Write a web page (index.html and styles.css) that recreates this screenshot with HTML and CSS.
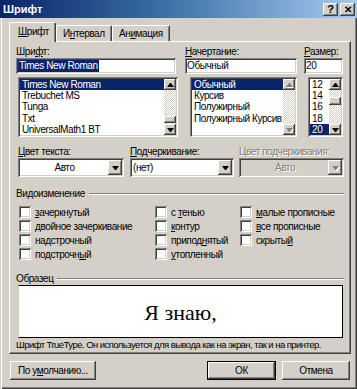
FILE: index.html
```html
<!DOCTYPE html>
<html lang="ru">
<head>
<meta charset="utf-8">
<title>Шрифт</title>
<link rel="stylesheet" href="styles.css">
</head>
<body>
<div class="dlg">
  <div class="title">
    <span class="title-text">Шрифт</span>
    <div class="tbtns"><span class="tb">?</span><span class="tb tb-x">✕</span></div>
  </div>
  <div class="tabs">
    <div class="tab sel"><u>Ш</u>рифт</div>
    <div class="tab">И<u>н</u>тервал</div>
    <div class="tab">Ан<u>и</u>мация</div>
  </div>
  <div class="panel">
    <div class="top3">
      <div class="col">
        <div class="lbl">Шри<u>ф</u>т:</div>
        <div class="field"><span class="hl">Times New Roman</span></div>
        <div class="list list-font">
          <div class="items">
            <div class="row sel">Times New Roman</div>
            <div class="row">Trebuchet MS</div>
            <div class="row">Tunga</div>
            <div class="row">Txt</div>
            <div class="row">UniversalMath1 BT</div>
          </div>
          <div class="sb">
            <span class="sbtn"><i class="up"></i></span>
            <span class="track"><span class="thumb t-font"></span></span>
            <span class="sbtn"><i class="dn"></i></span>
          </div>
        </div>
      </div>
      <div class="col">
        <div class="lbl"><u>Н</u>ачертание:</div>
        <div class="field">Обычный</div>
        <div class="list list-style">
          <div class="items">
            <div class="row sel">Обычный</div>
            <div class="row">Курсив</div>
            <div class="row">Полужирный</div>
            <div class="row">Полужирный Курсив</div>
          </div>
          <div class="sb">
            <span class="sbtn"><i class="up dis"></i></span>
            <span class="track"></span>
            <span class="sbtn"><i class="dn dis"></i></span>
          </div>
        </div>
      </div>
      <div class="col">
        <div class="lbl"><u>Р</u>азмер:</div>
        <div class="field">20</div>
        <div class="list list-size">
          <div class="items">
            <div class="row">12</div>
            <div class="row">14</div>
            <div class="row">16</div>
            <div class="row">18</div>
            <div class="row sel">20</div>
          </div>
          <div class="sb">
            <span class="sbtn"><i class="up"></i></span>
            <span class="track"><span class="thumb t-size"></span></span>
            <span class="sbtn"><i class="dn"></i></span>
          </div>
        </div>
      </div>
    </div>

    <div class="combos">
      <div class="ccol">
        <div class="lbl"><u>Ц</u>вет текста:</div>
        <div class="combo"><span class="cval center">Авто</span><span class="dbtn"><i class="dn"></i></span></div>
      </div>
      <div class="ccol">
        <div class="lbl"><u>П</u>одчеркивание:</div>
        <div class="combo"><span class="cval">(нет)</span><span class="dbtn"><i class="dn"></i></span></div>
      </div>
      <div class="ccol">
        <div class="lbl gray">Цвет подчеркивания:</div>
        <div class="combo disabled"><span class="cval center gray">Авто</span><span class="dbtn"><i class="dn dis"></i></span></div>
      </div>
    </div>

    <div class="group-h"><span>Видоизменение</span><span class="etch"></span></div>
    <div class="checks">
      <label class="chk"><span class="box"></span><span><u>з</u>ачеркнутый</span></label>
      <label class="chk"><span class="box"></span><span>с <u>т</u>енью</span></label>
      <label class="chk"><span class="box"></span><span><u>м</u>алые прописные</span></label>
      <label class="chk"><span class="box"></span><span><u>д</u>войное зачеркивание</span></label>
      <label class="chk"><span class="box"></span><span><u>к</u>онтур</span></label>
      <label class="chk"><span class="box"></span><span><u>в</u>се прописные</span></label>
      <label class="chk"><span class="box"></span><span>на<u>д</u>строчный</span></label>
      <label class="chk"><span class="box"></span><span>припод<u>н</u>ятый</span></label>
      <label class="chk"><span class="box"></span><span>скрыты<u>й</u></span></label>
      <label class="chk"><span class="box"></span><span>подстрочн<u>ы</u>й</span></label>
      <label class="chk"><span class="box"></span><span><u>у</u>топленный</span></label>
    </div>

    <div class="group-h g2"><span>Образец</span><span class="etch"></span></div>
    <div class="sample"><span>Я знаю,</span></div>
    <div class="caption">Шрифт TrueType. Он используется для вывода как на экран, так и на принтер.</div>
  </div>
  <div class="buttons">
    <span class="btn b-def">По у<u>м</u>олчанию...</span>
    <span class="spacer"></span>
    <span class="btn b-ok">ОК</span>
    <span class="btn b-cancel">Отмена</span>
  </div>
</div>
</body>
</html>
```
FILE: styles.css
```css
* { box-sizing: border-box; margin: 0; padding: 0; }
html, body { width: 357px; height: 389px; overflow: hidden; }
body {
  background: #d4d0c8;
  font-family: "Liberation Sans", Arial, sans-serif;
  font-size: 10px;
  letter-spacing: -0.4px;
  color: #000;
}
u { text-decoration: underline; }

.dlg {
  width: 357px;
  height: 389px;
  display: flex;
  flex-direction: column;
  box-shadow: inset 1px 0 #d4d0c8, inset 2px 0 #fff, inset -1px -1px #404040, inset -2px -2px #808080;
}

.title {
  height: 18px;
  flex: none;
  display: flex;
  align-items: center;
  justify-content: space-between;
  background: linear-gradient(90deg, #0a246a 0%, #3a6ea5 45%, #a6caf0 100%);
  padding-left: 3px;
  padding-right: 2px;
}
.title-text {
  color: #fff;
  font-weight: bold;
  font-size: 11px;
  letter-spacing: 0;
}
.tbtns { display: flex; gap: 2px; }
.tb {
  width: 15px;
  height: 13px;
  background: #d4d0c8;
  box-shadow: inset -1px -1px #404040, inset 1px 1px #fff, inset -2px -2px #808080;
  font-weight: bold;
  font-size: 11px;
  line-height: 13px;
  text-align: center;
  letter-spacing: 0;
}
.tb-x { font-size: 10px; }

.tabs {
  flex: none;
  display: flex;
  align-items: flex-end;
  height: 19px;
  margin-top: 4px;
  padding-left: 9px;
  position: relative;
  z-index: 2;
}
.tab {
  height: 16px;
  padding: 0 6px;
  line-height: 15px;
  background: #d4d0c8;
  border-top: 1px solid #fff;
  border-left: 1px solid #fff;
  border-right: 1px solid #404040;
  box-shadow: inset -1px 0 #808080;
  border-radius: 2px 2px 0 0;
  white-space: nowrap;
}
.tab.sel {
  height: 20px;
  margin-bottom: -1px;
  padding: 0 8px;
  line-height: 17px;
}
.tab:nth-child(2) { width: 56px; }
.tab:nth-child(3) { width: 58px; }
.tab.sel { width: 47px; }

.panel {
  flex: none;
  margin-left: 9px;
  width: 342px;
  height: 313px;
  border-top: 1px solid #fff;
  border-left: 1px solid #fff;
  border-right: 1px solid #404040;
  border-bottom: 1px solid #404040;
  box-shadow: inset -1px -1px #808080;
  padding: 4px 0 0 6px;
  display: flex;
  flex-direction: column;
}

.lbl { height: 12px; line-height: 12px; white-space: nowrap; }
.gray { color: #808080; text-shadow: 1px 1px #fff; }

.top3 {
  display: grid;
  grid-template-columns: 162px 112px 39px;
  column-gap: 7px;
}
.col { display: flex; flex-direction: column; }
.field {
  height: 16px;
  background: #fff;
  box-shadow: inset 1px 1px #808080, inset -1px -1px #fff, inset 2px 2px #404040, inset -2px -2px #d4d0c8;
  padding: 2px 2px 0 2px;
  line-height: 12px;
  white-space: nowrap;
  overflow: hidden;
}
.col:nth-child(1) .field { width: 160px; }
.hl { background: #0a246a; color: #fff; padding: 0 1px; display: inline-block; }

.list {
  height: 60px;
  margin-top: 3px;
  background: #fff;
  box-shadow: inset 1px 1px #808080, inset -1px -1px #fff, inset 2px 2px #404040, inset -2px -2px #d4d0c8;
  padding: 2px;
  display: flex;
}
.list-font { margin-left: 2px; }
.list-style { margin-left: 5px; }
.list-size { margin-left: 4px; }
.items { flex: 1; min-width: 0; overflow: hidden; }
.row {
  height: 11.2px;
  line-height: 11px;
  padding-left: 2px;
  white-space: nowrap;
}
.row.sel { background: #0a246a; color: #fff; }

.sb {
  width: 12px;
  flex: none;
  display: flex;
  flex-direction: column;
}
.sbtn {
  height: 11px;
  flex: none;
  background: #d4d0c8;
  box-shadow: inset -1px -1px #404040, inset 1px 1px #fff, inset -2px -2px #808080;
  display: flex;
  align-items: center;
  justify-content: center;
}
.track {
  flex: 1;
  background: repeating-conic-gradient(#fff 0 25%, #d4d0c8 0 50%) 0 0 / 2px 2px;
  display: flex;
  flex-direction: column;
}
.thumb {
  height: 8px;
  background: #d4d0c8;
  box-shadow: inset -1px -1px #404040, inset 1px 1px #fff, inset -2px -2px #808080;
}
.t-font { margin-top: 26px; height: 7px; }
.t-size { margin-top: 7px; }

i.up, i.dn {
  display: block;
  width: 1px;
  height: 0;
  border-left: 3px solid transparent;
  border-right: 3px solid transparent;
  box-sizing: content-box;
}
i.up { border-bottom: 4px solid #000; }
i.dn { border-top: 4px solid #000; }
i.up.dis { border-bottom-color: #808080; filter: drop-shadow(1px 1px 0 #fff); }
i.dn.dis { border-top-color: #808080; filter: drop-shadow(1px 1px 0 #fff); }

.combos {
  display: grid;
  grid-template-columns: 106px 104px 104px;
  column-gap: 6px;
  margin-top: 9px;
  margin-left: 2px;
}
.combos .ccol:nth-child(3) { margin-left: -1px; }
.combo {
  height: 19px;
  background: #fff;
  box-shadow: inset 1px 1px #808080, inset -1px -1px #fff, inset 2px 2px #404040, inset -2px -2px #d4d0c8;
  padding: 2px;
  display: flex;
  align-items: stretch;
}
.combo.disabled { background: #d4d0c8; }
.cval { flex: 1; line-height: 15px; padding-left: 1px; white-space: nowrap; }
.cval.center { text-align: center; }
.dbtn {
  width: 14px;
  flex: none;
  background: #d4d0c8;
  box-shadow: inset -1px -1px #404040, inset 1px 1px #fff, inset -2px -2px #808080;
  display: flex;
  align-items: center;
  justify-content: center;
}

.group-h {
  display: flex;
  align-items: center;
  gap: 4px;
  height: 11px;
  margin-top: 11px;
  padding-right: 6px;
  white-space: nowrap;
}
.group-h .etch {
  flex: 1;
  height: 2px;
  border-top: 1px solid #808080;
  border-bottom: 1px solid #fff;
}
.group-h.g2 { margin-top: 12px; }

.checks {
  display: grid;
  grid-template-columns: 136px 85px auto;
  grid-auto-rows: 14px;
  margin-top: 6px;
  margin-left: 3px;
}
.chk { display: flex; align-items: center; gap: 4px; white-space: nowrap; }
.box {
  width: 12px;
  height: 12px;
  flex: none;
  background: #fff;
  box-shadow: inset 1px 1px #808080, inset -1px -1px #fff, inset 2px 2px #404040, inset -2px -2px #d4d0c8;
}

.sample {
  margin-top: 1px;
  margin-left: 2px;
  width: 325px;
  height: 53px;
  background: #fff;
  border: 1px solid #000;
  border-left-color: #d4d0c8;
  display: flex;
  align-items: center;
  justify-content: center;
}
.sample span {
  font-family: "Liberation Serif", "Times New Roman", serif;
  font-size: 22px;
  letter-spacing: 0;
  margin-top: 3px;
}
.caption {
  margin-top: 1px;
  height: 12px;
  line-height: 12px;
  font-size: 9.5px;
  letter-spacing: -0.55px;
  white-space: nowrap;
}

.buttons {
  display: flex;
  margin-top: 7px;
  padding-left: 10px;
  padding-right: 7px;
  gap: 6px;
}
.spacer { flex: 1; }
.btn {
  height: 19px;
  line-height: 19px;
  text-align: center;
  background: #d4d0c8;
  box-shadow: inset -1px -1px #404040, inset 1px 1px #fff, inset -2px -2px #808080;
}
.b-def { width: 86px; }
.b-ok {
  width: 69px;
  border: 1px solid #000;
  line-height: 17px;
}
.b-cancel { width: 68px; }
```
